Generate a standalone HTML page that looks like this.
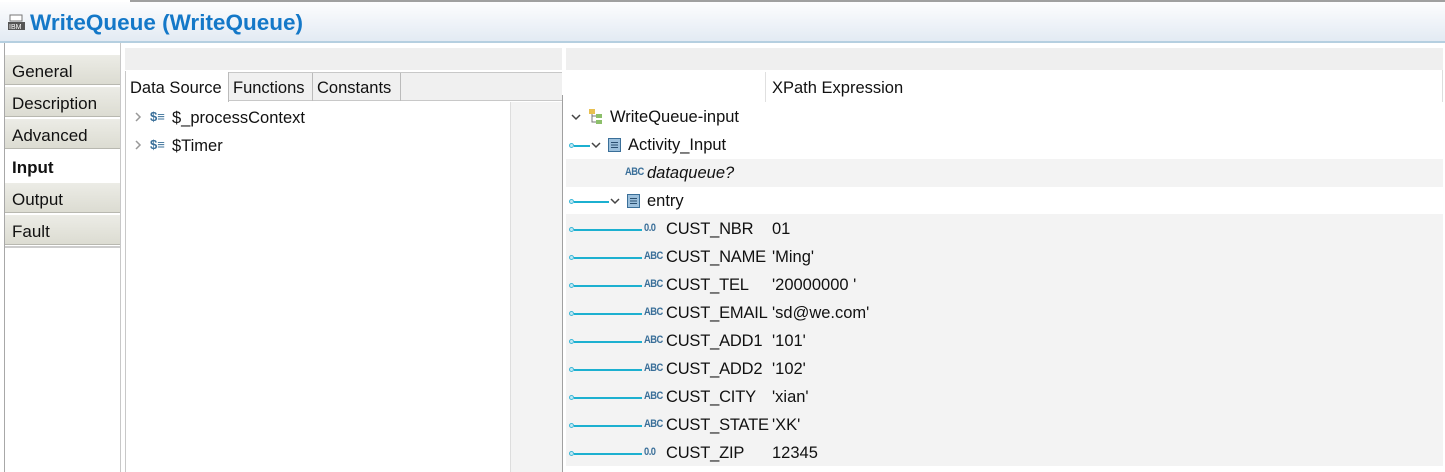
<!DOCTYPE html>
<html><head><style>
*{margin:0;padding:0;box-sizing:border-box}
body{width:1445px;height:472px;overflow:hidden;background:#fff;font-family:"Liberation Sans",sans-serif;font-size:16.5px;color:#111;position:relative}
.a{position:absolute}
.tab{position:absolute;left:5px;width:115px;height:31px;background:linear-gradient(#ecece6,#dcdcd2);border-top:1px solid #fff;border-bottom:1px solid #b8b8b0;padding:7px 0 0 7px;font-size:17px}
.t{position:absolute;white-space:nowrap}
.dot{position:absolute;width:5px;height:5px;border:1.5px solid #3cb8d8;border-radius:50%;background:#bfe8f4}
.ln{position:absolute;height:1.5px;background:#1cb0d0}
.ic{position:absolute;font-size:11px;font-weight:bold;color:#3a6f99;letter-spacing:-0.6px;transform:scaleX(0.85);transform-origin:left}
.chev{position:absolute}
</style></head><body>
<div class="a" style="left:130px;top:0;width:1315px;height:2px;background:#a0a0a0"></div>
<div class="a" style="left:0;top:2px;width:1445px;height:40px;background:linear-gradient(#fdfdfe,#e2eaf3)"></div>
<div class="a" style="left:0;top:41px;width:1445px;height:2px;background:#b5cfe0"></div>
<svg class="a" style="left:8px;top:14px" width="20" height="18"><rect x="2" y="1" width="12" height="6" fill="#fff" stroke="#777"/><rect x="0" y="8" width="17" height="8" fill="#555"/><text x="1" y="15" font-size="7" fill="#fff" font-family="Liberation Sans">IBM</text></svg>
<div class="t" style="left:30px;top:10px;font-size:22.5px;font-weight:bold;color:#1478c8">WriteQueue (WriteQueue)</div>
<div class="a" style="left:4px;top:43px;width:1px;height:429px;background:#a8a8a8"></div>
<div class="a" style="left:120px;top:43px;width:1px;height:429px;background:#c8c8c8"></div>
<div class="tab" style="top:54px">General</div>
<div class="tab" style="top:86px">Description</div>
<div class="tab" style="top:118px">Advanced</div>
<div class="a" style="left:5px;top:150px;width:115px;height:32px;background:#fff;padding:8px 0 0 7px;font-weight:bold;font-size:17px">Input</div>
<div class="tab" style="top:182px">Output</div>
<div class="tab" style="top:214px">Fault</div>
<div class="a" style="left:5px;top:246px;width:115px;height:2px;background:#ccc"></div>
<!-- left panel -->
<div class="a" style="left:125px;top:48px;width:437px;height:22px;background:#efefef"></div>
<div class="a" style="left:125px;top:71px;width:1px;height:401px;background:#c8c8c8"></div>
<div class="a" style="left:126px;top:72px;width:436px;height:29px;background:#f0f0f0;border-bottom:1px solid #c8c8c8;border-top:1px solid #c8c8c8"></div>
<div class="a" style="left:126px;top:72px;width:103px;height:30px;background:#fff;border-right:1px solid #bbb;padding:7px 0 0 4px">Data Source</div>
<div class="a" style="left:229px;top:73px;width:84px;height:28px;border-right:1px solid #bbb;padding:6px 0 0 4px">Functions</div>
<div class="a" style="left:313px;top:73px;width:88px;height:28px;border-right:1px solid #bbb;padding:6px 0 0 4px">Constants</div>
<div class="a" style="left:510px;top:102px;width:52px;height:370px;background:#f3f3f3;border-left:1px solid #ddd"></div>
<div class="a" style="left:562px;top:95px;width:1px;height:377px;background:#a0a0a0"></div>
<svg class="chev" style="left:134px;top:112px" width="8" height="10"><path d="M2 1l4 4-4 4" stroke="#999" stroke-width="1.5" fill="none"/></svg>
<div class="t" style="left:150px;top:109px;font-size:13px;color:#3a6f99;font-weight:bold">$&#8801;</div>
<div class="t" style="left:172px;top:109px">$_processContext</div>
<svg class="chev" style="left:134px;top:140px" width="8" height="10"><path d="M2 1l4 4-4 4" stroke="#999" stroke-width="1.5" fill="none"/></svg>
<div class="t" style="left:150px;top:137px;font-size:13px;color:#3a6f99;font-weight:bold">$&#8801;</div>
<div class="t" style="left:172px;top:137px">$Timer</div>
<!-- right panel -->
<div class="a" style="left:566px;top:48px;width:877px;height:22px;background:#efefef"></div>
<div class="a" style="left:1442px;top:70px;width:1px;height:32px;background:#ddd"></div>
<div class="a" style="left:765px;top:72px;width:1px;height:30px;background:#e0e0e0"></div>
<div class="t" style="left:772px;top:79px">XPath Expression</div>
<div class="a" style="left:566px;top:159px;width:877px;height:28px;background:#f3f3f3"></div>
<div class="a" style="left:566px;top:214px;width:877px;height:252px;background:#f3f3f3"></div>
<svg class="chev" style="left:571px;top:113px" width="10" height="8"><path d="M1 2l4 4 4-4" stroke="#444" stroke-width="1.5" fill="none"/></svg>
<svg class="a" style="left:589px;top:109px" width="16" height="16"><rect x="0" y="0" width="6" height="5" fill="#e8c050"/><rect x="7" y="5" width="6" height="4" fill="#8cbf6a"/><rect x="7" y="11" width="6" height="4" fill="#8cbf6a"/><path d="M3 5v8h4M3 7h4" stroke="#777" fill="none"/></svg>
<div class="t" style="left:610px;top:108px">WriteQueue-input</div>
<div class="dot" style="left:569px;top:143px"></div><div class="ln" style="left:574px;top:145px;width:16px"></div>
<svg class="chev" style="left:591px;top:141px" width="10" height="8"><path d="M1 2l4 4 4-4" stroke="#444" stroke-width="1.5" fill="none"/></svg>
<svg class="a" style="left:608px;top:138px" width="13" height="14"><rect x="0.5" y="0.5" width="12" height="13" fill="#9cc0dc" stroke="#3a6f99"/><path d="M3 4.5h7M3 7h7M3 9.5h7" stroke="#2a4f70"/></svg>
<div class="t" style="left:628px;top:136px">Activity_Input</div>
<div class="ic" style="left:625px;top:166px">ABC</div>
<div class="t" style="left:647px;top:164px;font-style:italic">dataqueue?</div>
<div class="dot" style="left:569px;top:199px"></div><div class="ln" style="left:574px;top:201px;width:35px"></div>
<svg class="chev" style="left:610px;top:197px" width="10" height="8"><path d="M1 2l4 4 4-4" stroke="#444" stroke-width="1.5" fill="none"/></svg>
<svg class="a" style="left:627px;top:194px" width="13" height="14"><rect x="0.5" y="0.5" width="12" height="13" fill="#9cc0dc" stroke="#3a6f99"/><path d="M3 4.5h7M3 7h7M3 9.5h7" stroke="#2a4f70"/></svg>
<div class="t" style="left:647px;top:192px">entry</div>
<div id="rows"></div>
<script>
var d=[["0.0","CUST_NBR","01"],["ABC","CUST_NAME","'Ming'"],["ABC","CUST_TEL","'20000000 '"],["ABC","CUST_EMAIL","'sd@we.com'"],["ABC","CUST_ADD1","'101'"],["ABC","CUST_ADD2","'102'"],["ABC","CUST_CITY","'xian'"],["ABC","CUST_STATE","'XK'"],["0.0","CUST_ZIP","12345"]];
var h="";d.forEach(function(r,i){var y=229+i*28;
h+='<div class="dot" style="left:569px;top:'+(y-2)+'px"></div><div class="ln" style="left:574px;top:'+y+'px;width:68px"></div><div class="ic" style="left:644px;top:'+(y-7)+'px">'+r[0]+'</div><div class="t" style="left:666px;top:'+(y-9)+'px;letter-spacing:-0.2px">'+r[1]+'</div><div class="t" style="left:772px;top:'+(y-9)+'px">'+r[2]+'</div>';});
document.getElementById("rows").innerHTML=h;
</script>
</body></html>
